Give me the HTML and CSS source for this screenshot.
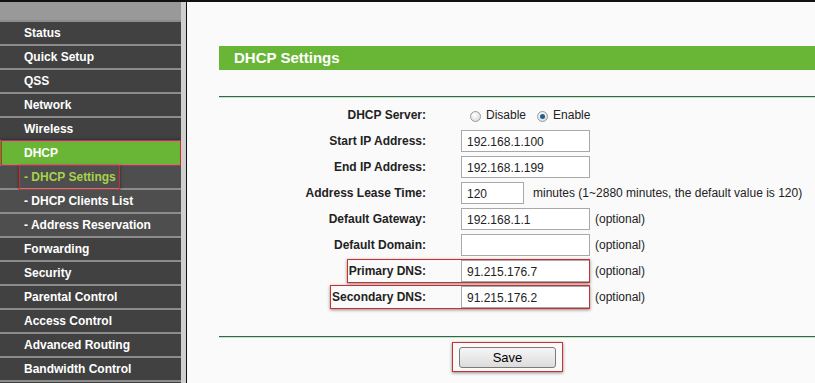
FILE: index.html
```html
<!DOCTYPE html>
<html lang="en">
<head>
  <meta charset="UTF-8">
  <title>DHCP Settings</title>
  <link rel="stylesheet" href="styles.css">
</head>
<body>

  <div class="page">
    <!-- left menu -->
    <div class="menu">
      <div class="menu-top"></div>
      <a class="menu-item">Status</a>
      <a class="menu-item">Quick Setup</a>
      <a class="menu-item">QSS</a>
      <a class="menu-item">Network</a>
      <a class="menu-item">Wireless</a>
      <a class="menu-item active marked">DHCP</a>
      <a class="menu-item sub current"><span class="marked-text">- DHCP Settings</span></a>
      <a class="menu-item sub">- DHCP Clients List</a>
      <a class="menu-item sub">- Address Reservation</a>
      <a class="menu-item">Forwarding</a>
      <a class="menu-item">Security</a>
      <a class="menu-item">Parental Control</a>
      <a class="menu-item">Access Control</a>
      <a class="menu-item">Advanced Routing</a>
      <a class="menu-item">Bandwidth Control</a>
      <a class="menu-item"></a>
    </div>
    <div class="menu-edge"></div>

    <!-- main panel -->
    <div class="main">
      <div class="title-bar">DHCP Settings</div>
      <div class="rule"></div>

      <div class="form">
        <div class="row">
          <div class="label"><span>DHCP Server:</span></div>
          <div class="field">
            <span class="radio"></span><span class="radio-text">Disable</span>
            <span class="radio checked"></span><span class="radio-text">Enable</span>
          </div>
        </div>
        <div class="row">
          <div class="label"><span>Start IP Address:</span></div>
          <div class="field"><input class="box" type="text" value="192.168.1.100"></div>
        </div>
        <div class="row">
          <div class="label"><span>End IP Address:</span></div>
          <div class="field"><input class="box" type="text" value="192.168.1.199"></div>
        </div>
        <div class="row">
          <div class="label"><span>Address Lease Time:</span></div>
          <div class="field">
            <input class="box short" type="text" value="120">
            <span class="note">minutes (1~2880 minutes, the default value is 120)</span>
          </div>
        </div>
        <div class="row">
          <div class="label"><span>Default Gateway:</span></div>
          <div class="field"><input class="box" type="text" value="192.168.1.1"><span class="note">(optional)</span></div>
        </div>
        <div class="row">
          <div class="label"><span>Default Domain:</span></div>
          <div class="field"><input class="box" type="text" value=""><span class="note">(optional)</span></div>
        </div>
        <div class="row">
          <div class="label"><span class="hl">Primary DNS:</span></div>
          <div class="field"><input class="box" type="text" value="91.215.176.7"><span class="note">(optional)</span></div>
        </div>
        <div class="row">
          <div class="label"><span class="hl">Secondary DNS:</span></div>
          <div class="field"><input class="box" type="text" value="91.215.176.2"><span class="note">(optional)</span></div>
        </div>
      </div>

      <div class="rule bottom"></div>

      <div class="actions">
        <span class="save-mark"><button class="save" type="button">Save</button></span>
      </div>
    </div>
  </div>

</body>
</html>
```

FILE: styles.css
```css
/* General */
body {
  margin: 0;
  padding: 0;
  font-family: "Liberation Sans", Arial, sans-serif;
  font-size: 12px;
  color: #000;
  background: #fafafa;
  overflow: hidden;
}

.page {
  display: flex;
  border-top: 2px solid #111;
  height: 381px;
  overflow: hidden;
}

/* Menu */
.menu {
  width: 181px;
  flex-shrink: 0;
  background: #8c8c8c;
  display: flex;
  flex-direction: column;
  gap: 2px;
  overflow: hidden;
}

.menu-top {
  height: 18px;
  flex-shrink: 0;
  background: #999;
}

.menu-item {
  position: relative;
  display: flex;
  align-items: center;
  height: 22px;
  flex-shrink: 0;
  padding-left: 24px;
  background: #414141;
  color: #fff;
  font-weight: bold;
  font-size: 12px;
  text-decoration: none;
}

.menu-item.sub {
  background: #4e4e4e;
}

.menu-item.active {
  background: #69b637;
}

.menu-item.current {
  color: #a9d24a;
}

.marked::after {
  content: "";
  position: absolute;
  left: 1px;
  right: 0;
  top: -2px;
  bottom: -2px;
  border: 1px solid #c9302f;
  box-shadow: 0 0 3px rgba(0, 0, 0, 0.5);
}

.marked-text {
  position: relative;
}

.marked-text::after {
  content: "";
  position: absolute;
  left: -5px;
  right: -4px;
  top: -5px;
  bottom: -6px;
  border: 1px solid #c9302f;
  box-shadow: 0 1px 3px rgba(0, 0, 0, 0.5);
}

.menu-edge {
  width: 5px;
  flex-shrink: 0;
  background: #cfcfcf;
  border-right: 1px solid #111;
}

/* Main panel */
.main {
  flex: 1;
  padding-left: 32px;
  background: #fafafa;
}

.title-bar {
  margin-top: 44px;
  height: 24px;
  line-height: 24px;
  padding-left: 15px;
  background: #69b637;
  color: #fff;
  font-size: 15px;
  font-weight: bold;
}

.rule {
  margin-top: 26px;
  border-top: 1px solid #2f6b42;
  border-bottom: 1px solid #c8e0cc;
}

.rule.bottom {
  margin-top: 26px;
}

.form {
  display: flex;
  flex-direction: column;
  padding-top: 4px;
}

.row {
  display: flex;
  align-items: center;
  height: 26px;
  gap: 35px;
}

.label {
  width: 207px;
  display: flex;
  justify-content: flex-end;
  font-weight: bold;
  color: #222;
}

.hl {
  position: relative;
}

.hl::after {
  content: "";
  position: absolute;
  left: -2px;
  right: -164px;
  top: -5px;
  bottom: -5px;
  border: 1px solid #c9302f;
  box-shadow: 0 1px 3px rgba(0, 0, 0, 0.45);
}

.field {
  display: flex;
  align-items: center;
}

.box {
  box-sizing: border-box;
  width: 129px;
  height: 22px;
  margin: 0;
  padding: 2px 5px 0;
  border: 1px solid #a9a9a9;
  border-radius: 0;
  background: #fff;
  font-family: "Liberation Sans", Arial, sans-serif;
  font-size: 12px;
  color: #222;
}

.box.short {
  width: 63px;
}

.note {
  margin-left: 5px;
  color: #222;
}

.box.short + .note {
  margin-left: 9px;
}

.radio {
  display: inline-block;
  box-sizing: border-box;
  width: 11px;
  height: 11px;
  margin: 2px 4px 0 9px;
  border: 1px solid #9a9a9a;
  border-radius: 50%;
  background: radial-gradient(circle at 40% 35%, #fff, #d4d4d4);
  position: relative;
}

.radio + .radio-text + .radio {
  margin-left: 8px;
}

.radio.checked::after {
  content: "";
  position: absolute;
  left: 2px;
  top: 2px;
  width: 5px;
  height: 5px;
  border-radius: 50%;
  background: #1f5f92;
}

.radio-text {
  margin-left: 1px;
  margin-right: 3px;
  color: #222;
}

/* Save */
.actions {
  display: flex;
  padding-left: 233px;
  padding-top: 4px;
}

.save-mark {
  padding: 4px 6px 3px 6px;
  border: 1px solid #c9302f;
  box-shadow: 0 1px 3px rgba(0, 0, 0, 0.45);
}

.save {
  display: block;
  width: 97px;
  height: 21px;
  padding: 0;
  border: 1px solid #7a7a7a;
  border-radius: 3px;
  background: linear-gradient(#f6f6f6, #dcdcdc);
  font-family: "Liberation Sans", Arial, sans-serif;
  font-size: 13px;
  color: #000;
}
```
